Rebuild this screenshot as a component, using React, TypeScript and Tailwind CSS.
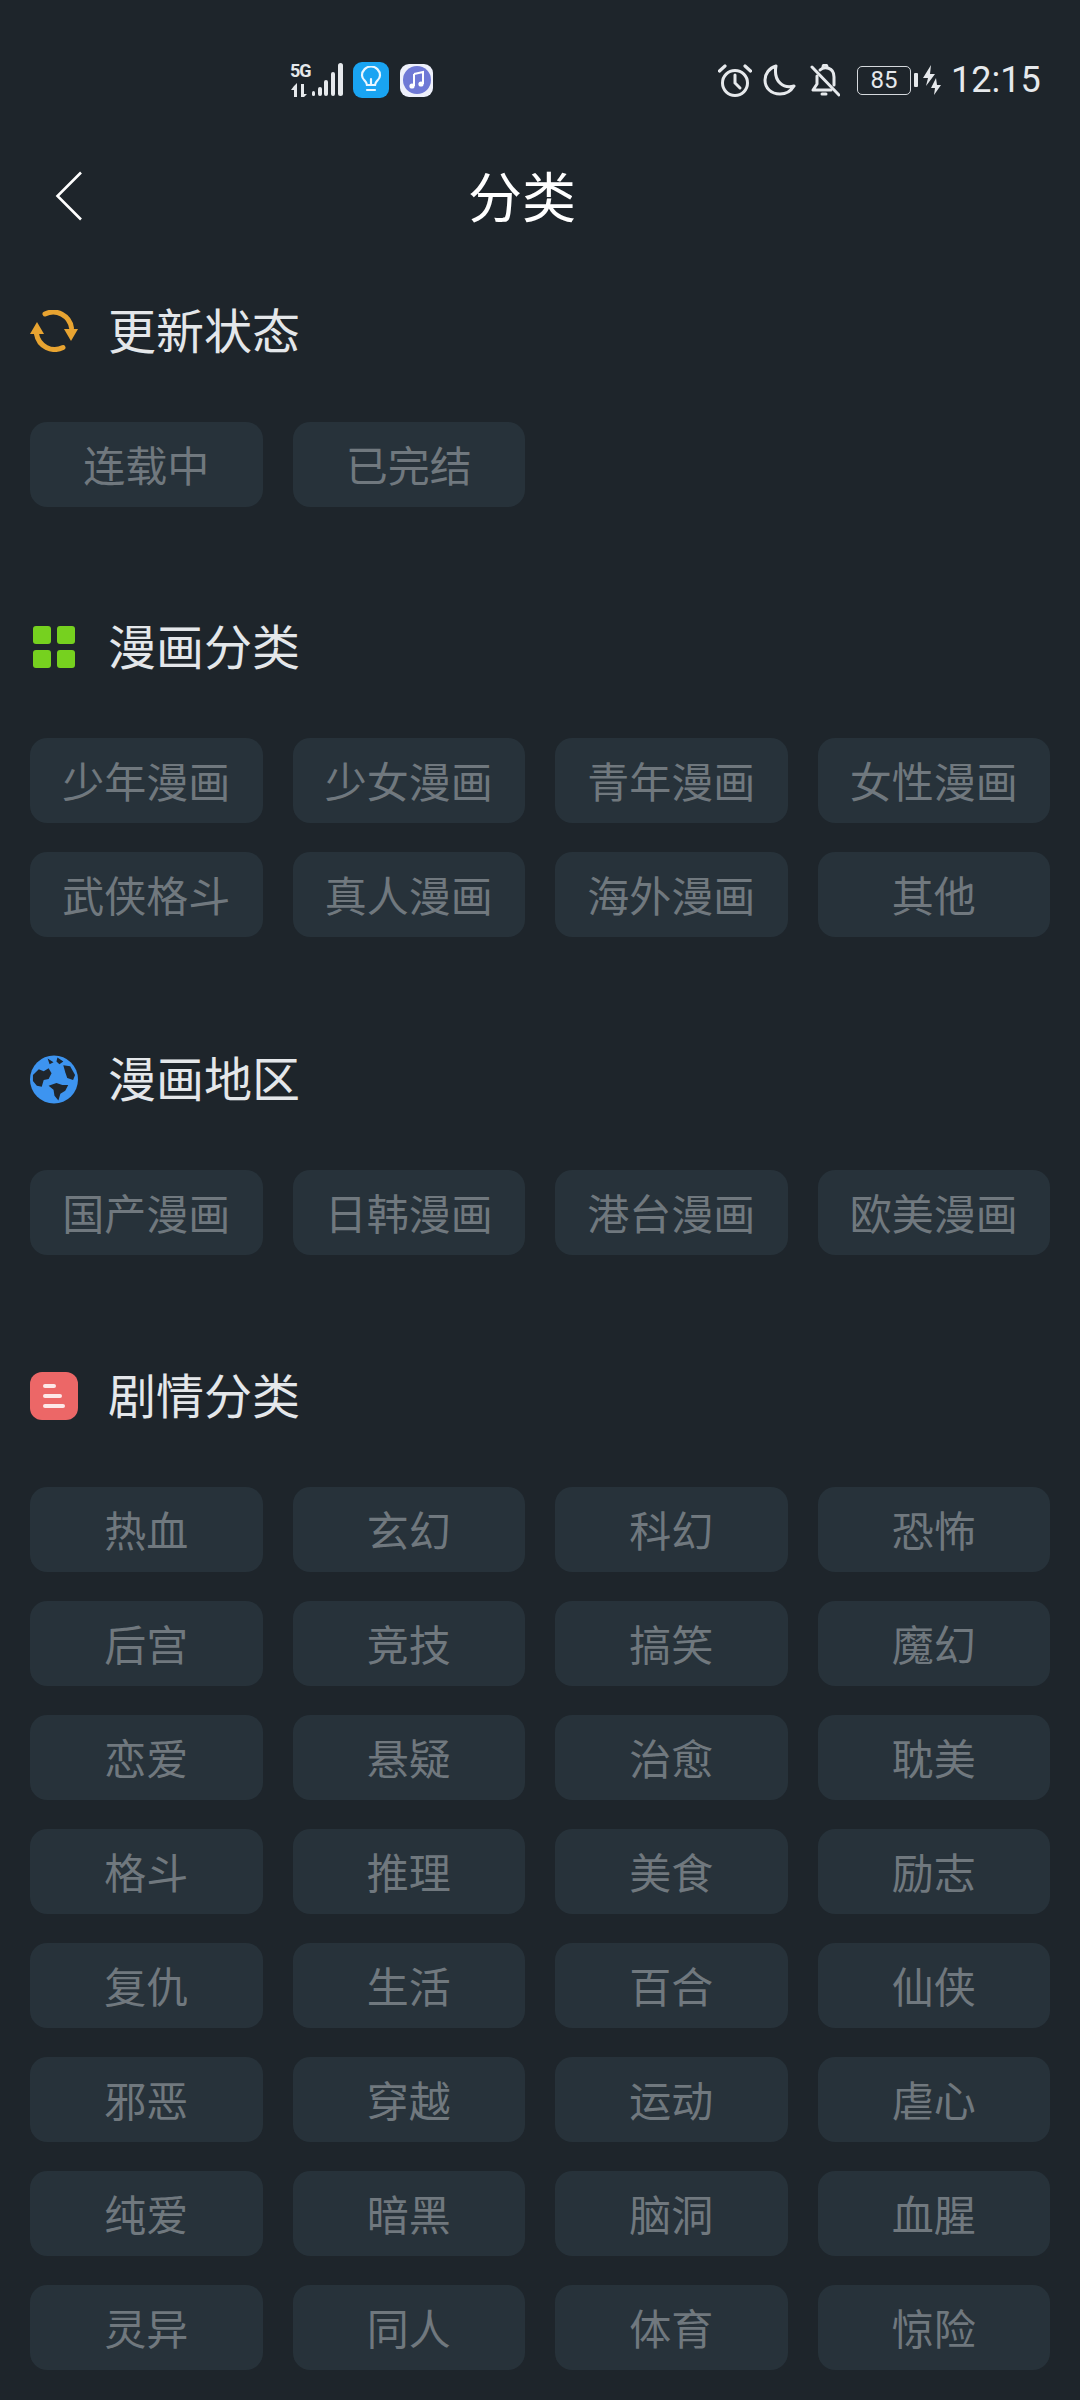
import React from "react";

const cjk = "font-['Noto_Sans_CJK_SC','Noto_Sans',sans-serif]";

// Section icons, drawn to match the reference
function RefreshIcon() {
  return (
    <svg width="48" height="42" viewBox="0 0 48 42" fill="none">
      <path d="M15 4 A18.5 18.5 0 0 1 41.5 18" stroke="#e8a431" strokeWidth="5" strokeLinecap="round" />
      <path d="M33 37.5 A18.5 18.5 0 0 1 6.5 24" stroke="#e8a431" strokeWidth="5" strokeLinecap="round" />
      <path d="M0 24 L7 12 L14 24 Z" fill="#e8a431" />
      <path d="M34 19 L48 19 L41 31 Z" fill="#e8a431" />
    </svg>
  );
}

function GridIcon() {
  return (
    <div className="grid h-[42px] w-[42px] grid-cols-2 gap-[6px]">
      <div className="rounded-[3px] bg-[#76d11f]" />
      <div className="rounded-[3px] bg-[#76d11f]" />
      <div className="rounded-[3px] bg-[#76d11f]" />
      <div className="rounded-[3px] bg-[#76d11f]" />
    </div>
  );
}

function GlobeIcon() {
  return (
    <svg width="49" height="49" viewBox="0 0 49 49">
      <circle cx="24.5" cy="24.5" r="24.5" fill="#3d94f0" />
      <path d="M3 20 L9 14 L14 16 L19 13 L22 18 L19 24 L14 25 L12 32 L7 31 L3 26 Z" fill="#1f262d" />
      <path d="M19 31 L27 28 L33 30 L39 30 L36 36 L31 39 L29 46 L25 41 L24 35 Z" fill="#1f262d" />
      <path d="M34 10 L41 11 L46 20 L44 25 L38 23 L36 17 Z" fill="#1f262d" />
      <path d="M18 3 L24 7 L20 9 Z M28 2 L34 6 L30 9 L27 6 Z" fill="#1f262d" />
    </svg>
  );
}

function ListIcon() {
  return (
    <div className="flex h-[48px] w-[48px] flex-col justify-center gap-[6px] rounded-[12px] bg-[#ec6767] pl-[13px]">
      <div className="h-[4px] w-[13px] rounded-full bg-[#fde8e8]" />
      <div className="h-[4px] w-[19px] rounded-full bg-[#fde8e8]" />
      <div className="h-[4px] w-[22px] rounded-full bg-[#fde8e8]" />
    </div>
  );
}

function StatusBar() {
  return (
    <div className="flex h-[160px] items-center pl-[290px] text-[#e6e9ec]">
      {/* signal */}
      <div className="flex h-[34px] w-[22px] flex-col justify-between">
        <span className="font-['Roboto',sans-serif] text-[18px] font-bold leading-[16px] tracking-[-1px]">5G</span>
        <svg width="18" height="14" viewBox="0 0 18 14" fill="#e6e9ec">
          <path d="M4 3 L7 0 L7 14 L4 14 Z M1 7 L4 3 L4 7 Z M11 1 L14 1 L14 11 L17 11 L14 14 L11 14 Z" />
        </svg>
      </div>
      <svg width="32" height="34" viewBox="22 0 32 34" fill="#e6e9ec">
        <rect x="22" y="28" width="3" height="5" rx="1.5" />
        <rect x="28" y="24" width="4" height="9" rx="2" />
        <rect x="34" y="17" width="4" height="16" rx="2" />
        <rect x="41" y="9" width="4" height="24" rx="2" />
        <rect x="48" y="0" width="5" height="33" rx="2.5" />
      </svg>
      {/* tips app */}
      <div className="ml-[9px] flex h-[36px] w-[36px] items-center justify-center rounded-[9px] bg-[#19a4f2]">
        <svg width="24" height="28" viewBox="0 0 24 28" fill="none" stroke="#e8f6ff" strokeWidth="2.2" strokeLinecap="round">
          <path d="M8 19 C8 15 3 14 3 9.5 A9 9 0 0 1 21 9.5 C21 14 16 15 16 19 Z" />
          <path d="M8 24 H16" />
          <path d="M12 19 V13" />
        </svg>
      </div>
      {/* music app */}
      <div className="ml-[11px] flex h-[33px] w-[33px] items-center justify-center rounded-[9px] bg-[#eef0fb]">
        <svg width="28" height="28" viewBox="0 0 28 28">
          <circle cx="14" cy="14" r="14" fill="#6f79d6" />
          <path d="M11 8 L20 6 V18" stroke="#fff" strokeWidth="2" fill="none" />
          <path d="M11 8 V20" stroke="#fff" strokeWidth="2" fill="none" />
          <circle cx="9" cy="20" r="2.6" fill="#fff" />
          <circle cx="18" cy="18" r="2.6" fill="#fff" />
        </svg>
      </div>
      {/* alarm */}
      <svg className="ml-[285px]" width="34" height="33" viewBox="0 0 34 33" fill="none" stroke="#e6e9ec" strokeWidth="3" strokeLinecap="round">
        <circle cx="17" cy="19" r="12.5" />
        <path d="M17 11 V19 L22 24" />
        <path d="M1.5 7 L7 2 M32.5 7 L27 2" strokeWidth="3.2" />
      </svg>
      {/* moon */}
      <svg className="ml-[11px]" width="33" height="32" viewBox="0 0 33 32" fill="none" stroke="#e6e9ec" strokeWidth="3" strokeLinejoin="round">
        <path d="M13 2 C6 4 2 10 2 16 C2 24 8 30 17 30 C23 30 28 27 31 22 C21 25 10 18 13 2 Z" />
      </svg>
      {/* muted bell */}
      <svg className="ml-[14px]" width="30" height="33" viewBox="0 0 30 33" fill="none" stroke="#e6e9ec" strokeWidth="3" strokeLinecap="round" strokeLinejoin="round">
        <path d="M7 12 V20 L3 26 H21" />
        <path d="M10 6 C14 2 24 3 24 13 V21" />
        <path d="M13 3 A2 2 0 0 1 17 3" />
        <path d="M12 30 H16" />
        <path d="M2 3 L29 31" />
      </svg>
      {/* battery */}
      <div className="ml-[17px] flex h-[29px] w-[54px] items-center justify-center rounded-[5px] border-[1.5px] border-[#d5d9dd] font-['Roboto',sans-serif] text-[24px] leading-none">
        85
      </div>
      <div className="ml-[3px] h-[14px] w-[4px] rounded-[1px] bg-[#e6e9ec]" />
      <svg className="ml-[5px]" width="18" height="30" viewBox="0 0 18 30" fill="#e6e9ec">
        <path d="M8 0 L0 13 H5 L3 21 L12 9 H7 Z" />
        <path d="M13 13 L8 23 H12 L11 30 L18 20 H14 Z" />
      </svg>
      <span className="ml-[10px] font-['Roboto',sans-serif] text-[36px] font-normal leading-none">12:15</span>
    </div>
  );
}

function Section({ icon, title, items, className }: { icon: React.ReactNode; title: string; items: string[]; className?: string }) {
  return (
    <section className={className}>
      <div className="flex h-[60px] items-center px-[30px]">
        <div className="flex w-[48px] justify-center">{icon}</div>
        <h2 className="ml-[30px] pb-[6px] text-[48px] font-normal leading-none text-[#e4e7ea]">{title}</h2>
      </div>
      <div className="mt-[61px] grid grid-cols-4 gap-x-[30px] gap-y-[29px] px-[30px]">
        {items.map((item) => (
          <div
            key={item}
            className="flex h-[85px] items-center justify-center rounded-[17px] bg-[#27323a] pb-[2px] text-[42px] leading-none text-[#70787e]"
          >
            {item}
          </div>
        ))}
      </div>
    </section>
  );
}

const plots = [
  "热血", "玄幻", "科幻", "恐怖",
  "后宫", "竞技", "搞笑", "魔幻",
  "恋爱", "悬疑", "治愈", "耽美",
  "格斗", "推理", "美食", "励志",
  "复仇", "生活", "百合", "仙侠",
  "邪恶", "穿越", "运动", "虐心",
  "纯爱", "暗黑", "脑洞", "血腥",
  "灵异", "同人", "体育", "惊险",
];

export default function App() {
  return (
    <div className={`h-[2400px] w-[1080px] overflow-hidden bg-[#1e252b] ${cjk}`}>
      <StatusBar />

      {/* nav bar */}
      <div className="relative flex h-[72px] items-center justify-center pr-[36px]">
        <svg className="absolute left-[55px] top-[11px]" width="28" height="50" viewBox="0 0 28 50" fill="none" stroke="#fff" strokeWidth="2.6">
          <path d="M26 1.5 L2.5 25 L26 48.5" />
        </svg>
        <h1 className="pb-[2px] text-[54px] font-normal leading-none text-white">分类</h1>
      </div>

      <Section className="mt-[69px]" icon={<RefreshIcon />} title="更新状态" items={["连载中", "已完结"]} />
      <Section
        className="mt-[110px]"
        icon={<GridIcon />}
        title="漫画分类"
        items={["少年漫画", "少女漫画", "青年漫画", "女性漫画", "武侠格斗", "真人漫画", "海外漫画", "其他"]}
      />
      <Section
        className="mt-[112px]"
        icon={<GlobeIcon />}
        title="漫画地区"
        items={["国产漫画", "日韩漫画", "港台漫画", "欧美漫画"]}
      />
      <Section className="mt-[111px]" icon={<ListIcon />} title="剧情分类" items={plots} />
    </div>
  );
}
